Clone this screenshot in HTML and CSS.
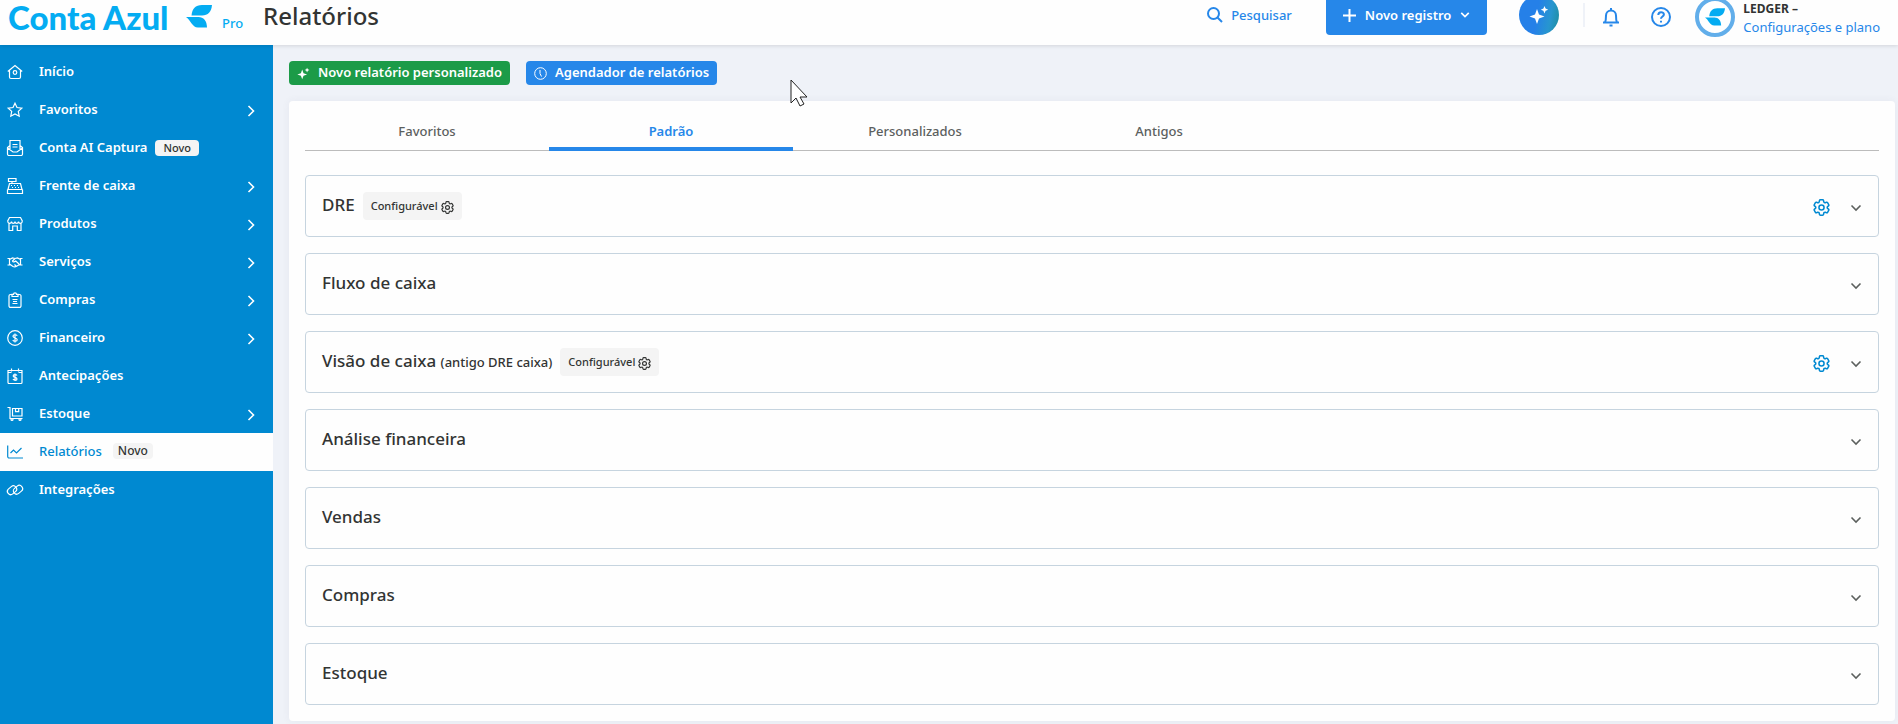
FILE: index.html
```html
<!DOCTYPE html>
<html lang="pt-BR">
<head>
    <meta charset="UTF-8">
    <meta name="viewport" content="width=device-width, initial-scale=1.0">
    <title>Relatórios</title>
    <link rel="stylesheet" href="styles.css">
</head>
<body>
    <svg class="symbols" aria-hidden="true">
        <symbol id="leaf" viewBox="0 0 26 23">
            <path d="M5.500 10.500C6 4 9.500 0 16 0h10c-.500 6.500-4 10.500-10 10.500z"/>
            <path d="M0 12h12.500c5 0 8.500 4 8.500 10.500H12C6 22.500 4.500 14.500 0 12z"/>
        </symbol>
        <symbol id="right" viewBox="0 0 8 12"><path d="M1.500 1l5 5-5 5"/></symbol>
        <symbol id="down" viewBox="0 0 12 8"><path d="M1.500 1.500L6 6l4.500-4.500"/></symbol>
        <symbol id="spark" viewBox="0 0 20 20">
            <path d="M8 4l2 5.500 5.500 2-5.500 2L8 19l-2-5.500L.500 11.500 6 9.500z"/>
            <path d="M15.500 1l1.100 2.600 2.600 1.100-2.600 1.100-1.100 2.600-1.100-2.600-2.600-1.100 2.600-1.100z"/>
        </symbol>
        <symbol id="gear" viewBox="2 2 20 20">
            <path d="M9.594 3.940c.090-.542.560-.940 1.110-.940h2.593c.550 0 1.020.398 1.110.940l.213 1.281c.063.374.313.686.645.870.074.040.147.083.220.127.325.196.720.257 1.075.124l1.217-.456a1.125 1.125 0 0 1 1.370.490l1.296 2.247a1.125 1.125 0 0 1-.260 1.431l-1.003.827c-.293.241-.438.613-.430.992a7.723 7.723 0 0 1 0 .255c-.008.378.137.750.430.991l1.004.827c.424.350.534.955.260 1.430l-1.298 2.247a1.125 1.125 0 0 1-1.369.491l-1.217-.456c-.355-.133-.750-.072-1.076.124a6.470 6.470 0 0 1-.220.128c-.331.183-.581.495-.644.869l-.213 1.281c-.090.543-.560.940-1.110.940h-2.594c-.550 0-1.019-.398-1.110-.940l-.213-1.281c-.062-.374-.312-.686-.644-.870a6.520 6.520 0 0 1-.220-.127c-.325-.196-.720-.257-1.076-.124l-1.217.456a1.125 1.125 0 0 1-1.369-.490l-1.297-2.247a1.125 1.125 0 0 1 .260-1.431l1.004-.827c.292-.240.437-.613.430-.991a6.932 6.932 0 0 1 0-.255c.007-.380-.138-.751-.430-.992l-1.004-.827a1.125 1.125 0 0 1-.260-1.430l1.297-2.247a1.125 1.125 0 0 1 1.370-.491l1.216.456c.356.133.751.072 1.076-.124.072-.044.146-.086.220-.128.332-.183.582-.495.644-.869z"/>
            <circle cx="12" cy="12" r="3"/>
        </symbol>
    </svg>

    <header class="header">
        <a class="logo" href="#">
            <span class="logo-name">Conta Azul</span>
            <svg class="logo-leaf"><use href="#leaf"/></svg>
            <span class="logo-plan">Pro</span>
        </a>
        <h1 class="title">Relatórios</h1>
        <div class="header-actions">
            <button class="search">
                <svg class="icon" viewBox="0 0 16 16"><circle cx="6.500" cy="6.500" r="5.500"/><path d="M10.500 10.500L15 15"/></svg>
                Pesquisar
            </button>
            <button class="new-record">
                <svg class="icon-plus" viewBox="0 0 13 13"><path d="M6.500 0v13M0 6.500h13"/></svg>
                Novo registro
                <svg class="icon-down"><use href="#down"/></svg>
            </button>
            <button class="assistant" aria-label="Assistente"><svg><use href="#spark"/></svg></button>
            <span class="divider"></span>
            <button class="round" aria-label="Notificações">
                <svg viewBox="0 0 20 20"><path d="M2 15.500h16M4 15.500c1-2 1-3.500 1-7a5 5 0 0 1 10 0c0 3.500 0 5 1 7M10 1v2.500M8.500 18.500h3"/></svg>
            </button>
            <button class="round" aria-label="Ajuda">
                <svg viewBox="0 0 20 20"><circle cx="10" cy="10" r="9"/><path d="M7.300 8c0-4 5.600-3.500 5.600-.500 0 2-2.900 2-2.900 4.300M10 13.800v1.700"/></svg>
            </button>
            <div class="account">
                <span class="avatar"><svg><use href="#leaf"/></svg></span>
                <div class="account-text">
                    <strong>LEDGER –</strong>
                    <a href="#">Configurações e plano</a>
                </div>
            </div>
        </div>
    </header>

    <div class="layout">
        <nav class="sidebar">
            <a class="item" href="#">
                <svg class="icon" viewBox="0 0 16 16"><path d="M.800 7.500L8 1.500l7.200 6M2.500 6.500V13a1.500 1.500 0 0 0 1.500 1.500h8a1.500 1.500 0 0 0 1.500-1.500V6.500"/><circle cx="8" cy="8.500" r="1.800"/></svg>
                Início
            </a>
            <a class="item" href="#">
                <svg class="icon" viewBox="0 0 16 16"><path d="M8 1.200l2 4.300 4.800.600-3.500 3.300.900 4.800L8 11.900l-4.200 2.300.900-4.800L1.200 6.100 6 5.500z"/></svg>
                Favoritos
                <svg class="arrow"><use href="#right"/></svg>
            </a>
            <a class="item" href="#">
                <svg class="icon" viewBox="0 0 16 16"><path d="M3 9V.500h10V9M5.500 4.500h5M5.500 7h5M3 5.500L.500 7.500v6.500a1.500 1.500 0 0 0 1.500 1.500h12a1.500 1.500 0 0 0 1.500-1.500V7.500L13 5.500M.500 8L6 12h4l5.500-4"/></svg>
                Conta AI Captura
                <span class="tag">Novo</span>
            </a>
            <a class="item" href="#">
                <svg class="icon" viewBox="0 0 16 16"><path d="M1.500.500h7.500v3H1.500zM5 3.500v2M2.500 5.500h11l1.500 6H1zM.500 11.500v4h15v-4M4 7.500h1M7 7.500h1M10 7.500h1M5 9.500h1M8 9.500h1M11 9.500h1"/></svg>
                Frente de caixa
                <svg class="arrow"><use href="#right"/></svg>
            </a>
            <a class="item" href="#">
                <svg class="icon" viewBox="0 0 16 16"><path d="M2.500 1.500h11l1.800 3.500c0 3-3.300 3-3.800.600C11 8 8.500 8 8 5.600 7.500 8 5 8 4.500 5.600 4 8 .700 8 .700 5zM2 7.500v7h3.700V10h4.600v4.500H14v-7"/></svg>
                Produtos
                <svg class="arrow"><use href="#right"/></svg>
            </a>
            <a class="item" href="#">
                <svg class="icon" viewBox="0 0 16 16"><path d="M.500 4.500h2v6.500h-2M15.500 4.500h-2V11h2M2.500 5.500l3-1.500 2.500.500 2.500-.500 3 1.500M8 4.500L5.500 7c.500 1.300 2 1 3.300 0l3.200 3M2.500 10l3.500 2.500c1.500.800 2.500.500 4-.500l3.500-2M7.500 10.500l1.500 1.500"/></svg>
                Serviços
                <svg class="arrow"><use href="#right"/></svg>
            </a>
            <a class="item" href="#">
                <svg class="icon" viewBox="0 0 16 16"><path d="M5 2.500H3.500A1.500 1.500 0 0 0 2 4v10a1.400 1.400 0 0 0 1.500 1.400h9A1.400 1.400 0 0 0 14 14V4a1.500 1.500 0 0 0-1.500-1.500H11M5 4.500V2.300h1.500a1.500 1.500 0 0 1 3 0H11v2.200zM5.500 7.500h5M6 9.500h4M5.500 11.500h5"/></svg>
                Compras
                <svg class="arrow"><use href="#right"/></svg>
            </a>
            <a class="item" href="#">
                <svg class="icon" viewBox="0 0 16 16"><circle cx="8" cy="8" r="7.300"/><path d="M10.200 5.800C9.500 4.400 6 4.300 6 6.300c0 2.200 4.200 1.200 4.200 3.400 0 2-3.700 1.900-4.400.300M8 3.500v9"/></svg>
                Financeiro
                <svg class="arrow"><use href="#right"/></svg>
            </a>
            <a class="item" href="#">
                <svg class="icon" viewBox="0 0 16 16"><path d="M1 2.500h14v12a1 1 0 0 1-1 1H2a1 1 0 0 1-1-1zM1 4.500h3.500M11.500 4.500H15M4.500.500v3M11.500.500v3M10 7.500C9.300 6.300 6.200 6.300 6.200 8c0 1.900 3.800 1 3.800 2.900 0 1.700-3.400 1.600-4 .200M8 5.500V13"/></svg>
                Antecipações
            </a>
            <a class="item" href="#">
                <svg class="icon" viewBox="0 0 16 16"><path d="M.500 1.500H3v11h12.500M5.500 2.500H15V10H5.500zM8.500 2.500v3.200h3.200V2.500"/><circle cx="5" cy="13.500" r="1"/><circle cx="13" cy="13.500" r="1"/></svg>
                Estoque
                <svg class="arrow"><use href="#right"/></svg>
            </a>
            <a class="item active" href="#">
                <svg class="icon" viewBox="0 0 16 16"><path d="M.700 1.500v11a1.500 1.500 0 0 0 1.500 1.500H16M3.500 9l3-3 3 3 5-5"/></svg>
                Relatórios
                <span class="tag">Novo</span>
            </a>
            <a class="item" href="#">
                <svg class="icon" viewBox="0 0 16 16">
                    <rect x="0" y="5" width="10" height="6.500" rx="3.250" transform="rotate(-40 5 8.200)"/>
                    <rect x="6" y="4.500" width="10" height="6.500" rx="3.250" transform="rotate(-40 11 7.800)"/>
                </svg>
                Integrações
            </a>
        </nav>

        <main class="main">
            <div class="toolbar">
                <button class="btn green">
                    <svg class="fill"><use href="#spark"/></svg>
                    Novo relatório personalizado
                </button>
                <button class="btn blue">
                    <svg viewBox="0 0 13 13"><circle cx="6.500" cy="6.500" r="5.800"/><path d="M6 3v3.500l1.500 3"/></svg>
                    Agendador de relatórios
                </button>
            </div>

            <div class="card">
                <div class="tabs" role="tablist">
                    <button class="tab" role="tab">Favoritos</button>
                    <button class="tab selected" role="tab" aria-selected="true">Padrão</button>
                    <button class="tab" role="tab">Personalizados</button>
                    <button class="tab" role="tab">Antigos</button>
                </div>

                <div class="groups">
                    <section class="group">
                        <h2>DRE</h2>
                        <span class="badge">Configurável <svg><use href="#gear"/></svg></span>
                        <div class="group-actions">
                            <button class="config" aria-label="Configurar DRE"><svg><use href="#gear"/></svg></button>
                            <button class="toggle" aria-label="Abrir DRE"><svg><use href="#down"/></svg></button>
                        </div>
                    </section>
                    <section class="group">
                        <h2>Fluxo de caixa</h2>
                        <div class="group-actions">
                            <button class="toggle" aria-label="Abrir Fluxo de caixa"><svg><use href="#down"/></svg></button>
                        </div>
                    </section>
                    <section class="group">
                        <h2>Visão de caixa <small>(antigo DRE caixa)</small></h2>
                        <span class="badge">Configurável <svg><use href="#gear"/></svg></span>
                        <div class="group-actions">
                            <button class="config" aria-label="Configurar Visão de caixa"><svg><use href="#gear"/></svg></button>
                            <button class="toggle" aria-label="Abrir Visão de caixa"><svg><use href="#down"/></svg></button>
                        </div>
                    </section>
                    <section class="group">
                        <h2>Análise financeira</h2>
                        <div class="group-actions">
                            <button class="toggle" aria-label="Abrir Análise financeira"><svg><use href="#down"/></svg></button>
                        </div>
                    </section>
                    <section class="group">
                        <h2>Vendas</h2>
                        <div class="group-actions">
                            <button class="toggle" aria-label="Abrir Vendas"><svg><use href="#down"/></svg></button>
                        </div>
                    </section>
                    <section class="group">
                        <h2>Compras</h2>
                        <div class="group-actions">
                            <button class="toggle" aria-label="Abrir Compras"><svg><use href="#down"/></svg></button>
                        </div>
                    </section>
                    <section class="group">
                        <h2>Estoque</h2>
                        <div class="group-actions">
                            <button class="toggle" aria-label="Abrir Estoque"><svg><use href="#down"/></svg></button>
                        </div>
                    </section>
                </div>
            </div>
        </main>
    </div>

    <svg class="cursor" viewBox="0 0 18 28"><path d="M1 1v23l5-5 4 8 4-2-4-7h7z"/></svg>
</body>
</html>
```
FILE: styles.css
```css
* {
    box-sizing: border-box;
}
body {
    margin: 0;
    min-height: 100vh;
    display: flex;
    flex-direction: column;
    overflow: hidden;
    background-color: #eff2f8;
    color: #323433;
    font-family: 'Noto Sans', 'Open Sans', sans-serif;
    font-size: 13px;
    line-height: 20px;
}
svg {
    flex: none;
    fill: none;
    stroke: currentColor;
}
a {
    color: #2687e9;
    text-decoration: none;
}
button {
    border: none;
    padding: 0;
    background: none;
    font: inherit;
    cursor: pointer;
}
h1, h2 {
    margin: 0;
    font-weight: 500;
}
.symbols {
    position: absolute;
    width: 0;
    height: 0;
}

/* Header, partly scrolled out at the top */
.header {
    position: relative;
    display: flex;
    align-items: center;
    height: 60px;
    margin-top: -15px;
    padding: 0 18px 0 8px;
    background-color: #fefefe;
    box-shadow: 0 1px 4px rgba(0, 0, 0, 0.12);
}
.logo {
    display: flex;
    align-items: center;
    width: 255px;
    padding-top: 3px;
    color: #04acf2;
}
.logo-name {
    width: 170px;
    font-family: Lato, 'Noto Sans', sans-serif;
    font-size: 33px;
    font-weight: 900;
    line-height: 32px;
    white-space: nowrap;
}
.logo-leaf {
    width: 26px;
    height: 23px;
    margin-left: 8px;
    fill: #04acf2;
    stroke: none;
}
.logo-plan {
    margin-left: 10px;
    padding-top: 12px;
    font-weight: 500;
}
.title {
    padding-top: 2px;
    font-size: 24px;
    line-height: 32px;
}
.header-actions {
    display: flex;
    align-items: center;
    margin-left: auto;
    color: #2687e9;
}
.search {
    display: flex;
    align-items: center;
    gap: 8px;
    margin-right: 34px;
    color: #2687e9;
    font-weight: 500;
}
.icon {
    width: 16px;
    height: 16px;
}
.search .icon {
    stroke-width: 2;
}
.new-record {
    display: flex;
    align-items: center;
    gap: 9px;
    height: 40px;
    padding: 0 17px;
    border-radius: 4px;
    background-color: #2687e9;
    color: #fff;
    font-weight: 600;
}
.icon-plus {
    width: 13px;
    height: 13px;
    stroke-width: 2;
}
.icon-down {
    width: 10px;
    height: 8px;
    stroke-width: 2;
}
.assistant {
    display: grid;
    place-items: center;
    width: 40px;
    height: 40px;
    margin-left: 32px;
    border-radius: 50%;
    background: linear-gradient(100deg, #2580e8 45%, #2796cf 75%, #1d8d9a);
}
.assistant svg {
    width: 20px;
    height: 20px;
    fill: #fff;
    stroke: none;
}
.divider {
    width: 2px;
    height: 24px;
    margin: 0 16px 0 24px;
    background-color: #eff2f8;
}
.round {
    display: flex;
    margin-right: 30px;
    padding-top: 3px;
    color: #2687e9;
}
.round svg {
    width: 20px;
    height: 20px;
    stroke-width: 2;
}
.account {
    display: flex;
    align-items: center;
    gap: 8px;
    margin-left: -6px;
    padding-top: 4px;
}
.avatar {
    display: grid;
    place-items: center;
    width: 40px;
    height: 40px;
    border: 4px solid #62aeea;
    border-radius: 50%;
    background-color: #fff;
}
.avatar svg {
    width: 20px;
    height: 18px;
    fill: #04acf2;
    stroke: none;
}
.account-text {
    display: flex;
    flex-direction: column;
    padding-top: 2px;
    line-height: 18px;
}
.account-text strong {
    color: #323433;
    font-size: 12px;
}

/* Sidebar */
.layout {
    flex: 1;
    display: flex;
}
.sidebar {
    flex: none;
    width: 273px;
    padding-top: 8px;
    background-color: #0089d1;
}
.item {
    display: flex;
    align-items: center;
    height: 38px;
    padding: 0 18px 2px 7px;
    color: #fff;
    font-weight: 600;
}
.item .icon {
    margin: 2px 16px 0 0;
    stroke-width: 1.2px;
    overflow: visible;
}
.item .arrow {
    width: 8px;
    height: 12px;
    margin: 3px 0 0 auto;
    stroke-width: 1.6px;
}
.tag {
    margin: 2px 0 0 8px;
    padding: 0 8px;
    border-radius: 4px;
    background-color: #f4f4f4;
    color: #323433;
    font-size: 11px;
    font-weight: 500;
    line-height: 16px;
}
.active {
    background-color: #fefefe;
    color: #0089d1;
    font-weight: 500;
}
.active .tag {
    margin: 0 0 0 11px;
    padding: 0 5px;
    font-size: 12px;
}

/* Content */
.main {
    flex: 1;
    min-width: 0;
    padding: 16px 3px 3px 16px;
}
.toolbar {
    display: flex;
    gap: 16px;
    margin-bottom: 16px;
}
.btn {
    display: flex;
    align-items: center;
    gap: 8px;
    height: 24px;
    padding: 0 8px 2px;
    border-radius: 4px;
    color: #fff;
    font-weight: 600;
}
.btn svg {
    width: 13px;
    height: 13px;
    margin-top: 2px;
}
.btn .fill {
    fill: #fff;
    stroke: none;
}
.green {
    background-color: #1c9b48;
}
.blue {
    background-color: #2687e9;
}
.card {
    padding: 0 16px 16px;
    border-radius: 4px;
    background-color: #fefefe;
    box-shadow: 0 0 8px rgba(60, 70, 110, 0.06);
}
.tabs {
    display: flex;
    height: 50px;
    margin-bottom: 24px;
    border-bottom: 1px solid #bcbcbc;
}
.tab {
    width: 244px;
    height: 50px;
    border-bottom: 4px solid transparent;
    padding-top: 14px;
    color: #5c605e;
    font-weight: 500;
}
.selected {
    border-color: #2687e9;
    color: #2687e9;
    font-weight: 600;
}
.groups {
    display: flex;
    flex-direction: column;
    gap: 16px;
}
.group {
    display: flex;
    align-items: center;
    gap: 8px;
    height: 62px;
    padding: 0 16px;
    border: 1px solid #c6d4df;
    border-radius: 4px;
}
.group h2 {
    padding-bottom: 2px;
    font-size: 17px;
    line-height: 24px;
}
.group small {
    font-size: 13px;
}
.badge {
    display: flex;
    align-items: center;
    gap: 3px;
    height: 28px;
    padding: 0 8px;
    border-radius: 4px;
    background-color: #f4f4f4;
    font-size: 11px;
    font-weight: 500;
}
.badge svg {
    width: 13px;
    height: 13px;
    margin-top: 2px;
    stroke-width: 1.8px;
}
.group-actions {
    display: flex;
    align-items: center;
    gap: 20px;
    margin-left: auto;
    padding-top: 2px;
}
.config, .toggle {
    display: flex;
    color: #0089d1;
}
.config svg {
    width: 17px;
    height: 17px;
    stroke-width: 1.8px;
}
.toggle {
    padding-top: 2px;
    color: #5c605e;
}
.toggle svg {
    width: 12px;
    height: 8px;
    stroke-width: 1.6px;
}

/* Mouse pointer lying over the page */
.cursor {
    position: absolute;
    left: 790px;
    top: 79px;
    width: 18px;
    height: 28px;
    fill: #fff;
    stroke: #222;
}
```
